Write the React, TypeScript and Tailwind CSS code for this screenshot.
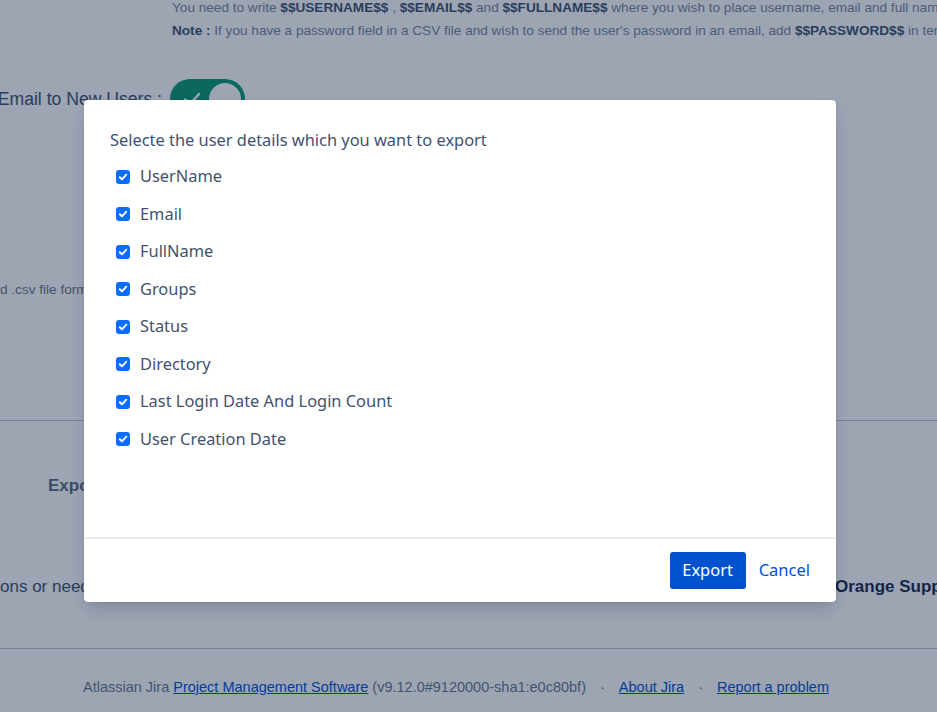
const fields = [
  "UserName",
  "Email",
  "FullName",
  "Groups",
  "Status",
  "Directory",
  "Last Login Date And Login Count",
  "User Creation Date",
];

function Check() {
  return (
    <span className="w-[14px] h-[14px] rounded-[3px] bg-[#0d6efd] flex items-center justify-center shrink-0">
      <svg width="10" height="10" viewBox="0 0 10 10" fill="none">
        <path d="M1.8 5.2 4 7.3 8.3 2.7" stroke="white" strokeWidth="1.9" strokeLinecap="round" strokeLinejoin="round" />
      </svg>
    </span>
  );
}

export default function App() {
  return (
    <div className="relative h-[712px] w-[937px] overflow-hidden bg-white font-['Liberation_Sans',sans-serif]">
      {/* page behind the dialog */}
      <div className="flex flex-col">
        <div className="pl-[172px] flex flex-col gap-[7px] text-[13.6px] leading-[16px] text-[#7a869a] whitespace-nowrap">
          <p>
            You need to write <b className="text-[#42526e]">$$USERNAME$$</b> , <b className="text-[#42526e]">$$EMAIL$$</b> and{" "}
            <b className="text-[#42526e]">$$FULLNAME$$</b> where you wish to place username, email and full name in the template.
          </p>
          <p>
            <b className="text-[#42526e]">Note :</b> If you have a password field in a CSV file and wish to send the user's password in an email, add{" "}
            <b className="text-[#42526e]">$$PASSWORD$$</b> in template.
          </p>
        </div>

        <div className="mt-[40px] flex items-center">
          <div className="w-[162px] shrink-0 flex justify-end whitespace-nowrap text-[17.6px] text-[#42526e]">Email to New Users :</div>
          <div className="ml-[8px] w-[75px] h-[40px] rounded-full bg-[#0a9a6e] flex items-center justify-between pl-[12px] pr-[4px]">
            <svg width="20" height="20" viewBox="0 0 20 20" fill="none">
              <path d="M3 10.5 8 15 17 5" stroke="white" strokeWidth="2.5" strokeLinecap="round" strokeLinejoin="round" />
            </svg>
            <span className="w-[32px] h-[32px] rounded-full bg-white" />
          </div>
        </div>

        <p className="mt-[163px] text-[13.6px] leading-[16px] text-[#6b778c] whitespace-nowrap">d .csv file format</p>

        <div className="mt-[122px] border-t border-[#c1c7d0]" />

        <p className="mt-[53px] pl-[48px] text-[17px] leading-[24px] font-semibold text-[#5e6c84]">Export</p>

        <div className="mt-[77px] flex text-[17px] leading-[24px] whitespace-nowrap">
          <span className="w-[835px] shrink-0 text-[#42526e]">ons or need</span>
          <b className="shrink-0 text-[#172b4d]">Orange Support</b>
        </div>

        <div className="mt-[49px] border-t border-[#c1c7d0] h-[100px] pt-[28px] pl-[83px] text-[14.5px] leading-[20px] text-[#6b778c] whitespace-nowrap">
          Atlassian Jira <a className="text-[#0052cc] underline">Project Management Software</a> (v9.12.0#9120000-sha1:e0c80bf)
          <span className="mx-[14px]">·</span>
          <a className="text-[#0052cc] underline">About Jira</a>
          <span className="mx-[14px]">·</span>
          <a className="text-[#0052cc] underline">Report a problem</a>
        </div>
      </div>

      {/* blanket */}
      <div className="absolute inset-0 bg-[rgba(9,30,66,0.4)]" />

      {/* dialog */}
      <div className="absolute left-[84px] top-[100px] w-[752px] h-[502px] bg-white rounded-[4px] shadow-[0_8px_16px_-4px_rgba(9,30,66,0.25),0_0_1px_rgba(9,30,66,0.31)] flex flex-col font-['Noto_Sans',sans-serif]">
        <div className="h-[437px] pt-[28px] px-[26px]">
          <p className="text-[16.4px] leading-[24px] text-[#42526e]">Selecte the user details which you want to export</p>
          <ul className="mt-[6px]">
            {fields.map((f) => (
              <li key={f} className="h-[37.5px] flex items-center gap-[10px] pl-[6px]">
                <Check />
                <span className="text-[16.4px] text-[#42526e]">{f}</span>
              </li>
            ))}
          </ul>
        </div>
        <div className="border-t-2 border-[#ebecf0] flex-1 flex items-center justify-end pr-[26px]">
          <button className="w-[76px] h-[37px] rounded-[3px] bg-[#0052cc] text-white text-[16.5px]">Export</button>
          <a className="ml-[13px] text-[16.5px] text-[#0052cc]">Cancel</a>
        </div>
      </div>
    </div>
  );
}
